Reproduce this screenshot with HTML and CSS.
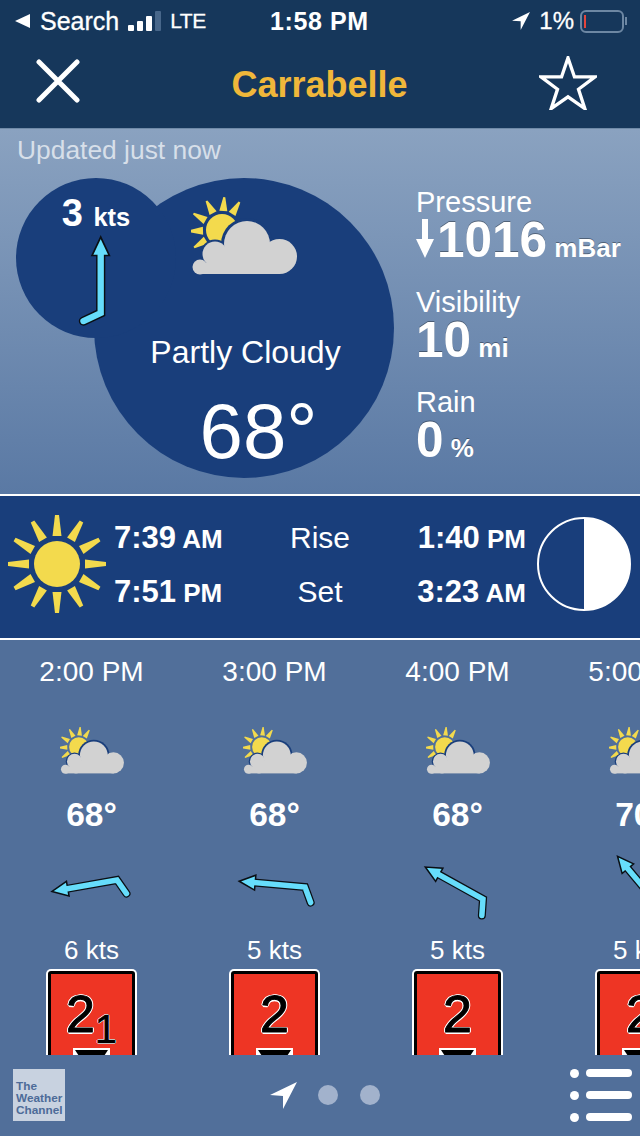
FILE: index.html
```html
<!DOCTYPE html>
<html lang="en">
<head>
	<meta charset="UTF-8">
	<title>Carrabelle</title>
	<link rel="stylesheet" href="styles.css">
</head>
<body>
	<svg class="sprites">
		<defs>
			<g id="partly">
				<g class="ray" transform="translate(31 33)">
					<polygon points="-1,-33 1,-33 4,-19 -4,-19" transform="rotate(4)"/>
					<polygon points="-1,-33 1,-33 4,-19 -4,-19" transform="rotate(32)"/>
					<polygon points="-1,-33 1,-33 4,-19 -4,-19" transform="rotate(-28)"/>
					<polygon points="-1,-33 1,-33 4,-19 -4,-19" transform="rotate(-60)"/>
					<polygon points="-1,-33 1,-33 4,-19 -4,-19" transform="rotate(-92)"/>
					<polygon points="-1,-33 1,-33 4,-19 -4,-19" transform="rotate(-122)"/>
				</g>
				<circle class="ray" cx="31" cy="33" r="16"/>
				<circle class="gap" cx="56" cy="47" r="26"/>
				<circle class="gap" cx="24" cy="57" r="14.5"/>
				<g class="cloud">
					<circle cx="9" cy="70" r="7.5"/>
					<circle cx="24" cy="57" r="12.5"/>
					<circle cx="56" cy="47" r="23"/>
					<circle cx="88.5" cy="59.5" r="17.5"/>
					<rect x="24" y="58" width="65" height="19"/>
					<rect x="9" y="66" width="20" height="11"/>
				</g>
			</g>
			<g id="wind">
				<polyline class="wind-line" points="0,-54 0,0 -15,7"/>
				<polygon class="wind-head" points="0,-66 -7.5,-50 7.5,-50"/>
				<polyline class="wind-fill" points="0,-52 0,0 -15,7"/>
			</g>
		</defs>
	</svg>

	<header class="top">
		<div class="status">
			<div class="status-left">
				<svg class="back-tri" viewBox="0 0 15 14"><polygon points="15,0 15,14 0,7"/></svg>
				<span class="search">Search</span>
				<div class="signal"><i class="b1"></i><i class="b2"></i><i class="b3"></i><i class="b4"></i></div>
				<span class="lte">LTE</span>
			</div>
			<div class="clock">1:58 PM</div>
			<div class="status-right">
				<svg class="loc-small" viewBox="0 0 27 27"><polygon points="27,0 0,13 13,14 13,27"/></svg>
				<span class="pct">1%</span>
				<div class="battery"><i></i></div>
				<div class="nub"></div>
			</div>
		</div>
		<div class="nav">
			<svg class="close" viewBox="0 0 44 44"><path d="M3 3L41 41M41 3L3 41"/></svg>
			<div class="title">Carrabelle</div>
			<svg class="star" viewBox="0 0 60 56"><polygon points="30,2 36.7,21.7 58,21.7 40.9,34.5 47.4,54.5 30,42.4 12.6,54.5 19.1,34.5 2,21.7 23.3,21.7"/></svg>
		</div>
	</header>

	<section class="hero">
		<div class="updated">Updated just now</div>
		<div class="hero-main">
			<div class="bubbles">
				<div class="bubble-big">
					<svg class="icon-big" viewBox="0 0 106 78"><use href="#partly"/></svg>
					<div class="cond">Partly Cloudy</div>
					<div class="temp">68°</div>
				</div>
				<div class="bubble-small">
					<div class="speed">3 <span>kts</span></div>
					<svg class="wind-big" viewBox="0 0 40 95"><use href="#wind" transform="translate(24.7 81) scale(1.15)"/></svg>
				</div>
			</div>
			<div class="stats">
				<div class="stat">
					<div class="stat-label">Pressure</div>
					<div class="stat-val"><svg class="down" viewBox="0 0 18 39"><polygon points="6,0 12,0 12,20 18,20 9,39 0,20 6,20"/></svg>1016<span> mBar</span></div>
				</div>
				<div class="stat">
					<div class="stat-label">Visibility</div>
					<div class="stat-val">10<span> mi</span></div>
				</div>
				<div class="stat">
					<div class="stat-label">Rain</div>
					<div class="stat-val">0<span> %</span></div>
				</div>
			</div>
		</div>
	</section>

	<section class="sunbar">
		<svg class="sun" viewBox="-50 -50 100 100">
			<circle r="23"/>
			<g>
				<polygon points="-2,-49 2,-49 4.5,-28 -4.5,-28"/>
				<polygon points="-2,-49 2,-49 4.5,-28 -4.5,-28" transform="rotate(30)"/>
				<polygon points="-2,-49 2,-49 4.5,-28 -4.5,-28" transform="rotate(60)"/>
				<polygon points="-2,-49 2,-49 4.5,-28 -4.5,-28" transform="rotate(90)"/>
				<polygon points="-2,-49 2,-49 4.5,-28 -4.5,-28" transform="rotate(120)"/>
				<polygon points="-2,-49 2,-49 4.5,-28 -4.5,-28" transform="rotate(150)"/>
				<polygon points="-2,-49 2,-49 4.5,-28 -4.5,-28" transform="rotate(180)"/>
				<polygon points="-2,-49 2,-49 4.5,-28 -4.5,-28" transform="rotate(210)"/>
				<polygon points="-2,-49 2,-49 4.5,-28 -4.5,-28" transform="rotate(240)"/>
				<polygon points="-2,-49 2,-49 4.5,-28 -4.5,-28" transform="rotate(270)"/>
				<polygon points="-2,-49 2,-49 4.5,-28 -4.5,-28" transform="rotate(300)"/>
				<polygon points="-2,-49 2,-49 4.5,-28 -4.5,-28" transform="rotate(330)"/>
			</g>
		</svg>
		<div class="times">
			<div class="time">7:39<span> AM</span></div>
			<div class="rs">Rise</div>
			<div class="time right">1:40<span> PM</span></div>
			<div class="time">7:51<span> PM</span></div>
			<div class="rs">Set</div>
			<div class="time right">3:23<span> AM</span></div>
		</div>
		<div class="moon"></div>
	</section>

	<section class="hours">
		<div class="hour">
			<div class="h-time">2:00 PM</div>
			<svg class="h-icon" viewBox="0 0 106 78"><use href="#partly"/></svg>
			<div class="h-temp">68°</div>
			<svg class="h-wind" viewBox="0 0 183 84"><use href="#wind" transform="translate(117 30) rotate(-100)"/></svg>
			<div class="h-kts">6 kts</div>
			<div class="sign">
				<div class="sign-num">2<span>1</span></div>
				<div class="sign-bar"></div>
			</div>
		</div>
		<div class="hour">
			<div class="h-time">3:00 PM</div>
			<svg class="h-icon" viewBox="0 0 106 78"><use href="#partly"/></svg>
			<div class="h-temp">68°</div>
			<svg class="h-wind" viewBox="0 0 183 84"><use href="#wind" transform="translate(122 37) rotate(-85)"/></svg>
			<div class="h-kts">5 kts</div>
			<div class="sign">
				<div class="sign-num">2</div>
				<div class="sign-bar"></div>
			</div>
		</div>
		<div class="hour">
			<div class="h-time">4:00 PM</div>
			<svg class="h-icon" viewBox="0 0 106 78"><use href="#partly"/></svg>
			<div class="h-temp">68°</div>
			<svg class="h-wind" viewBox="0 0 183 84"><use href="#wind" transform="translate(117 49) rotate(-61)"/></svg>
			<div class="h-kts">5 kts</div>
			<div class="sign">
				<div class="sign-num">2</div>
				<div class="sign-bar"></div>
			</div>
		</div>
		<div class="hour">
			<div class="h-time">5:00 PM</div>
			<svg class="h-icon" viewBox="0 0 106 78"><use href="#partly"/></svg>
			<div class="h-temp">70°</div>
			<svg class="h-wind" viewBox="0 0 183 84"><use href="#wind" transform="translate(111 57) rotate(-40)"/></svg>
			<div class="h-kts">5 kts</div>
			<div class="sign">
				<div class="sign-num">2</div>
				<div class="sign-bar"></div>
			</div>
		</div>
	</section>

	<footer class="foot">
		<div class="logo">The Weather Channel</div>
		<div class="pager">
			<svg class="loc" viewBox="0 0 27 27"><polygon points="27,0 0,13 13,14 13,27"/></svg>
			<i></i>
			<i></i>
		</div>
		<div class="menu">
			<div class="menu-row"><i></i><b></b></div>
			<div class="menu-row"><i></i><b></b></div>
			<div class="menu-row"><i></i><b></b></div>
		</div>
	</footer>
</body>
</html>
```
FILE: styles.css
```css
html, body{
	margin: 0;
	padding: 0;
}
body{
	width: 640px;
	height: 1136px;
	overflow: hidden;
	background: #516f9a;
	color: #fff;
	font-family: "Liberation Sans", Arial, sans-serif;
}
.sprites{
	display: block;
	width: 0;
	height: 0;
}
.ray{
	fill: #f3da4d;
}
.gap{
	fill: #193e7b;
}
.hours .gap{
	fill: #516f9a;
}
.cloud{
	fill: #d2d2d2;
}
.wind-line{
	fill: none;
	stroke: #0a0f14;
	stroke-width: 8;
	stroke-linecap: round;
	stroke-linejoin: miter;
}
.wind-fill{
	fill: none;
	stroke: #66ddfb;
	stroke-width: 5.5;
	stroke-linecap: round;
	stroke-linejoin: miter;
}
.wind-head{
	fill: #66ddfb;
	stroke: #0a0f14;
	stroke-width: 1.5;
}

/* top bar */
.top{
	background: #16375b;
	height: 128px;
	border-bottom: 1px solid #6f8aa8;
}
.status{
	height: 42px;
	position: relative;
	display: flex;
	justify-content: space-between;
	align-items: center;
	padding: 0 13px 0 15px;
	font-size: 24px;
}
.status-left, .status-right{
	display: flex;
	align-items: center;
}
.back-tri{
	width: 15px;
	height: 14px;
	fill: #fff;
	margin-right: 10px;
}
.search{
	font-size: 25px;
	-webkit-text-stroke: 0.3px #fff;
}
.signal{
	display: flex;
	align-items: flex-end;
	gap: 3px;
	height: 20px;
	margin: 0 9px;
}
.signal i{
	display: block;
	width: 6px;
	background: #fff;
	border-radius: 1px;
}
.signal .b1{ height: 6px; }
.signal .b2{ height: 10px; }
.signal .b3{ height: 15px; }
.signal .b4{ height: 20px; background: #48678a; }
.lte{
	font-size: 21px;
	letter-spacing: -0.5px;
	-webkit-text-stroke: 0.3px #fff;
}
.clock{
	position: absolute;
	left: 270px;
	top: 7px;
	font-size: 25px;
	font-weight: bold;
	letter-spacing: 0.6px;
}
.loc-small{
	width: 18px;
	height: 18px;
	fill: #fff;
	margin-right: 9px;
}
.pct{
	font-size: 24px;
	margin-right: 6px;
	-webkit-text-stroke: 0.3px #fff;
}
.battery{
	box-sizing: border-box;
	width: 44px;
	height: 23px;
	border: 2px solid #6d87a3;
	border-radius: 6px;
	padding: 3px 2px;
}
.battery i{
	display: block;
	width: 2px;
	height: 13px;
	background: #e5453c;
}
.nub{
	width: 2px;
	height: 8px;
	margin-left: 1px;
	background: #6d87a3;
}
.nav{
	height: 86px;
	display: grid;
	grid-template-columns: 1fr auto 1fr;
	align-items: center;
	padding: 0 43px 0 36px;
}
.close{
	width: 44px;
	height: 44px;
	margin-bottom: 8px;
	fill: none;
	stroke: #fff;
	stroke-width: 5;
	stroke-linecap: round;
}
.title{
	color: #f0b73a;
	font-size: 36px;
	font-weight: bold;
	line-height: 40px;
	position: relative;
	left: 3px;
}
.star{
	justify-self: end;
	width: 58px;
	height: 54px;
	margin-bottom: 4px;
	fill: none;
	stroke: #fff;
	stroke-width: 3.5;
}

/* current conditions */
.hero{
	height: 365px;
	background: linear-gradient(#8aa2c0, #5a79a4);
}
.updated{
	height: 49px;
	padding: 6px 0 0 17px;
	box-sizing: border-box;
	font-size: 26.4px;
	line-height: 30px;
	color: #d7dfe9;
}
.hero-main{
	display: flex;
}
.bubbles{
	position: relative;
	width: 416px;
	height: 300px;
	flex: none;
}
.bubble-big{
	position: absolute;
	left: 94px;
	top: 0;
	width: 300px;
	height: 300px;
	border-radius: 50%;
	background: #193e7b;
	display: flex;
	flex-direction: column;
	align-items: center;
}
.icon-big{
	width: 106px;
	height: 78px;
	margin-top: 19px;
}
.cond{
	font-size: 32px;
	line-height: 36px;
	margin-top: 59px;
	padding-left: 3px;
}
.temp{
	font-size: 78px;
	line-height: 80px;
	margin-top: 21px;
	padding-left: 29px;
}
.bubble-small{
	position: absolute;
	left: 16px;
	top: 0;
	width: 160px;
	height: 160px;
	border-radius: 50%;
	background: #193e7b;
	display: flex;
	flex-direction: column;
	align-items: center;
	padding-top: 16px;
	box-sizing: border-box;
}
.speed{
	font-size: 38px;
	line-height: 38px;
	font-weight: bold;
	white-space: nowrap;
}
.speed span{
	font-size: 25.5px;
	line-height: 1;
}
.wind-big{
	width: 40px;
	height: 95px;
	flex: none;
}
.stats{
	display: flex;
	flex-direction: column;
	gap: 25px;
	margin-top: 10px;
}
.stat-label{
	font-size: 29px;
	line-height: 29px;
}
.stat-val{
	height: 46px;
	font-size: 49.5px;
	line-height: 46px;
	font-weight: bold;
	white-space: nowrap;
	text-shadow: 0 -1px 0 rgba(0, 0, 0, 0.35);
}
.stat-val span{
	font-size: 26px;
	line-height: 1;
}
.down{
	width: 18px;
	height: 39px;
	margin-right: 3px;
	fill: #fff;
	vertical-align: -1px;
}

/* sun and moon */
.sunbar{
	height: 136px;
	padding: 0 0 6px 7px;
	background: #193e7b;
	border-top: 2px solid #fff;
	border-bottom: 2px solid #fff;
	display: flex;
	align-items: center;
}
.sun{
	width: 100px;
	height: 100px;
	fill: #f3da4d;
	flex: none;
}
.times{
	width: 412px;
	margin: 2px 0 0 7px;
	display: grid;
	grid-template-columns: 1fr auto 1fr;
	row-gap: 18px;
	align-items: baseline;
}
.time{
	font-size: 31px;
	line-height: 36px;
	font-weight: bold;
}
.time span{
	font-size: 26px;
	line-height: 1;
}
.time.right{
	text-align: right;
}
.rs{
	font-size: 30px;
	line-height: 36px;
	text-align: center;
}
.moon{
	box-sizing: border-box;
	width: 94px;
	height: 94px;
	margin-left: 11px;
	border: 2px solid #fff;
	border-radius: 50%;
	background: linear-gradient(90deg, #193e7b 50%, #fff 50%);
	flex: none;
}

/* hourly strip */
.hours{
	height: 415px;
	display: flex;
	overflow: hidden;
}
.hour{
	flex: 0 0 183px;
	display: flex;
	flex-direction: column;
	align-items: center;
	padding-top: 16px;
	box-sizing: border-box;
}
.h-time{
	font-size: 28px;
	line-height: 32px;
	white-space: nowrap;
}
.h-icon{
	width: 64px;
	height: 47px;
	margin-top: 39px;
	flex: none;
}
.h-temp{
	font-size: 33.5px;
	line-height: 36px;
	font-weight: bold;
	margin-top: 23px;
}
.h-wind{
	width: 183px;
	height: 84px;
	margin-top: 17px;
	flex: none;
}
.h-kts{
	font-size: 26px;
	line-height: 30px;
	margin-top: 1px;
}
.sign{
	box-sizing: border-box;
	width: 87px;
	height: 100px;
	margin-top: 6px;
	flex: none;
	background: #ee3524;
	border: 3px solid #000;
	border-radius: 3px 3px 0 0;
	box-shadow: 0 0 0 2px #fff;
	padding-top: 14px;
	display: flex;
	flex-direction: column;
	align-items: center;
}
.sign-num{
	height: 60px;
	font-size: 52px;
	line-height: 52px;
	color: #000;
	-webkit-text-stroke: 1px #000;
	text-shadow: 1.5px 0 #fff, -1.5px 0 #fff, 0 1.5px #fff, 0 -1.5px #fff, 1px 1px #fff, -1px 1px #fff, 1px -1px #fff, -1px -1px #fff;
}
.sign-num span{
	font-size: 40px;
	line-height: 0;
	vertical-align: -11px;
	-webkit-text-stroke: 0.6px #000;
	text-shadow: 1px 0 #fff, -1px 0 #fff, 0 1px #fff, 0 -1px #fff;
}
.sign-bar{
	width: 37px;
	height: 12px;
	background: #fff;
	flex: none;
}
.sign-bar::after{
	content: "";
	display: block;
	height: 10px;
	margin: 2px 2px 0;
	background: #000;
	clip-path: polygon(0 0, 100% 0, 80% 100%, 20% 100%);
}

/* footer */
.foot{
	box-sizing: border-box;
	height: 81px;
	display: flex;
	align-items: center;
	padding: 0 8px 1px 13px;
}
.logo{
	box-sizing: border-box;
	width: 52px;
	height: 52px;
	background: #c8d2e0;
	color: #4d6b98;
	font-size: 11.8px;
	line-height: 12px;
	font-weight: bold;
	padding: 11px 0 0 3px;
}
.pager{
	display: flex;
	align-items: center;
	margin-left: 205px;
}
.loc{
	width: 27px;
	height: 27px;
	fill: #fff;
	margin-right: 21px;
}
.pager i{
	display: block;
	width: 20px;
	height: 20px;
	margin-right: 22px;
	border-radius: 50%;
	background: #a2b2cc;
}
.menu{
	margin-left: auto;
	display: flex;
	flex-direction: column;
	gap: 13px;
}
.menu-row{
	display: flex;
	align-items: center;
	gap: 7px;
}
.menu-row i{
	display: block;
	width: 9px;
	height: 9px;
	border-radius: 50%;
	background: #fff;
}
.menu-row b{
	display: block;
	width: 46px;
	height: 8px;
	border-radius: 4px;
	background: #fff;
}
```
